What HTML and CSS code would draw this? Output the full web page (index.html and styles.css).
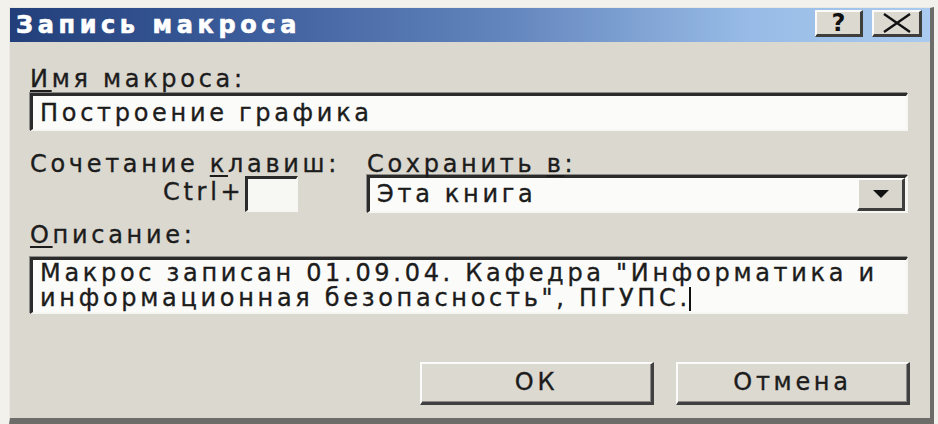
FILE: index.html
```html
<!DOCTYPE html>
<html lang="ru">
<head>
<meta charset="utf-8">
<title>Запись макроса</title>
<link rel="stylesheet" href="styles.css">
</head>
<body>
<div class="dialog">
  <div class="titlebar">
    <span class="title">Запись макроса</span>
    <div class="tbtns">
      <span class="tbtn help">?</span>
      <span class="tbtn close">
        <svg width="32" height="20" viewBox="0 0 32 20"><path d="M3 1 L29 19 M29 1 L3 19" stroke="#111" stroke-width="2.4" fill="none"/></svg>
      </span>
    </div>
  </div>
  <div class="content">
    <div class="label first"><u>И</u>мя макроса:</div>
    <div class="field name">Построение графика</div>

    <div class="row2">
      <div class="colleft">
        <div class="label">Сочетание <u>к</u>лавиш:</div>
        <div class="ctrlrow">
          <span class="ctrl">Ctrl+</span>
          <span class="keybox"></span>
        </div>
      </div>
      <div class="colright">
        <div class="label">Сохранить <u>в</u>:</div>
        <div class="combo">
          <span class="combotext">Эта книга</span>
          <span class="dropbtn"><svg width="16" height="9" viewBox="0 0 16 9"><path d="M0 0 H16 L8 8 Z" fill="#111"/></svg></span>
        </div>
      </div>
    </div>

    <div class="label desc"><u>О</u>писание:</div>
    <div class="field area">Макрос записан 01.09.04. Кафедра "Информатика и информационная безопасность", ПГУПС.<span class="caret"></span></div>

    <div class="buttons">
      <span class="btn">ОК</span>
      <span class="btn">Отмена</span>
    </div>
  </div>
</div>
</body>
</html>
```

FILE: styles.css
```css
html, body {
  margin: 0;
  padding: 0;
}
body {
  background: #f2f1ec;
  font-family: "DejaVu Sans", "Liberation Sans", sans-serif;
  color: #1c1c1c;
  width: 938px;
  height: 424px;
  overflow: hidden;
}
.dialog {
  margin: 7px 4px 0 9px;
  height: 410px;
  background: #dbd8d0;
  border-top: 1px solid #e9e8e3;
  border-left: 1px solid #e9e8e3;
  border-right: 4px solid #6c6c69;
  border-bottom: 6px solid #6c6c69;
}
.titlebar {
  height: 34px;
  display: flex;
  align-items: center;
  justify-content: space-between;
  padding: 0 8px 0 6px;
  background: linear-gradient(to right, #223f7a 0%, #3b5c9a 25%, #6587bf 55%, #97bbe6 80%, #aacbef 100%);
}
.title {
  color: #fff;
  font-weight: bold;
  font-size: 24px;
  letter-spacing: 4.6px;
  line-height: 34px;
  -webkit-text-stroke: 0.6px #fff;
}
.tbtns {
  display: flex;
  gap: 9px;
  align-self: flex-start;
  margin-top: 2px;
}
.tbtn {
  box-sizing: border-box;
  height: 27px;
  display: flex;
  align-items: center;
  justify-content: center;
  background: #dcd9d1;
  border-style: solid;
  border-width: 2px 3px 3px 2px;
  border-color: #fbfbf9 #3e3e3c #3e3e3c #fbfbf9;
}
.help {
  width: 48px;
  font-weight: bold;
  font-size: 24px;
  color: #111;
  line-height: 1;
}
.close {
  width: 50px;
}
.content {
  padding: 0 22px 0 20px;
  font-size: 24px;
  letter-spacing: 3.7px;
  -webkit-text-stroke: 0.35px #1c1c1c;
}
.label {
  line-height: 24px;
  height: 24px;
  white-space: nowrap;
}
.label u {
  text-decoration-thickness: 2px;
  text-underline-offset: 3px;
}
.label.first {
  margin-top: 25px;
  margin-bottom: 2px;
}
.field {
  background: #fbfbf9;
  border-style: solid;
  border-width: 3px 2px 2px 3px;
  border-color: #2b2b2b #f6f6f3 #f6f6f3 #2b2b2b;
  box-shadow: -1px -1px 0 #8e8d89;
  line-height: 28px;
  padding: 3px 7px 2px 7px;
}
.name {
  height: 28px;
}
.row2 {
  display: flex;
  margin-top: 21px;
}
.colleft {
  width: 337px;
  flex: none;
}
.colright {
  flex: 1;
}
.ctrlrow {
  display: flex;
  margin-left: 133px;
  gap: 1px;
}
.ctrl {
  line-height: 24px;
  padding-top: 4px;
}
.keybox {
  box-sizing: border-box;
  width: 53px;
  height: 36px;
  background: #f7f7f4;
  border-style: solid;
  border-width: 3px 2px 2px 3px;
  border-color: #2b2b2b #f6f6f3 #f6f6f3 #2b2b2b;
}
.combo {
  box-sizing: border-box;
  height: 38px;
  margin-top: -1px;
  display: flex;
  align-items: stretch;
  background: #fbfbf9;
  border-style: solid;
  border-width: 3px 3px 2px 3px;
  border-color: #2b2b2b #f6f6f3 #f6f6f3 #2b2b2b;
  box-shadow: -1px -1px 0 #8e8d89;
}
.combotext {
  flex: 1;
  padding: 2px 0 0 7px;
  line-height: 28px;
}
.dropbtn {
  box-sizing: border-box;
  width: 48px;
  display: flex;
  align-items: center;
  justify-content: center;
  background: #d9d6ce;
  border-style: solid;
  border-width: 2px 3px 3px 2px;
  border-color: #fbfbf9 #3e3e3c #3e3e3c #fbfbf9;
}
.label.desc {
  margin-top: 10px;
}
.area {
  margin-top: 10px;
  height: 50px;
  line-height: 25px;
  padding: 1px 7px 1px 7px;
}
.caret {
  display: inline-block;
  width: 2px;
  height: 24px;
  background: #111;
  vertical-align: -5px;
  margin-left: -2px;
}
.buttons {
  display: flex;
  justify-content: flex-end;
  gap: 22px;
  margin-top: 48px;
  margin-right: -2px;
}
.btn {
  box-sizing: border-box;
  height: 43px;
  display: flex;
  align-items: center;
  justify-content: center;
  background: #dcd9d1;
  border-style: solid;
  border-width: 2px 3px 3px 2px;
  border-color: #fbfbf9 #404040 #404040 #fbfbf9;
  box-shadow: inset -1px -1px 0 #8c8b87;
  width: 234px;
  padding-bottom: 2px;
}
```
